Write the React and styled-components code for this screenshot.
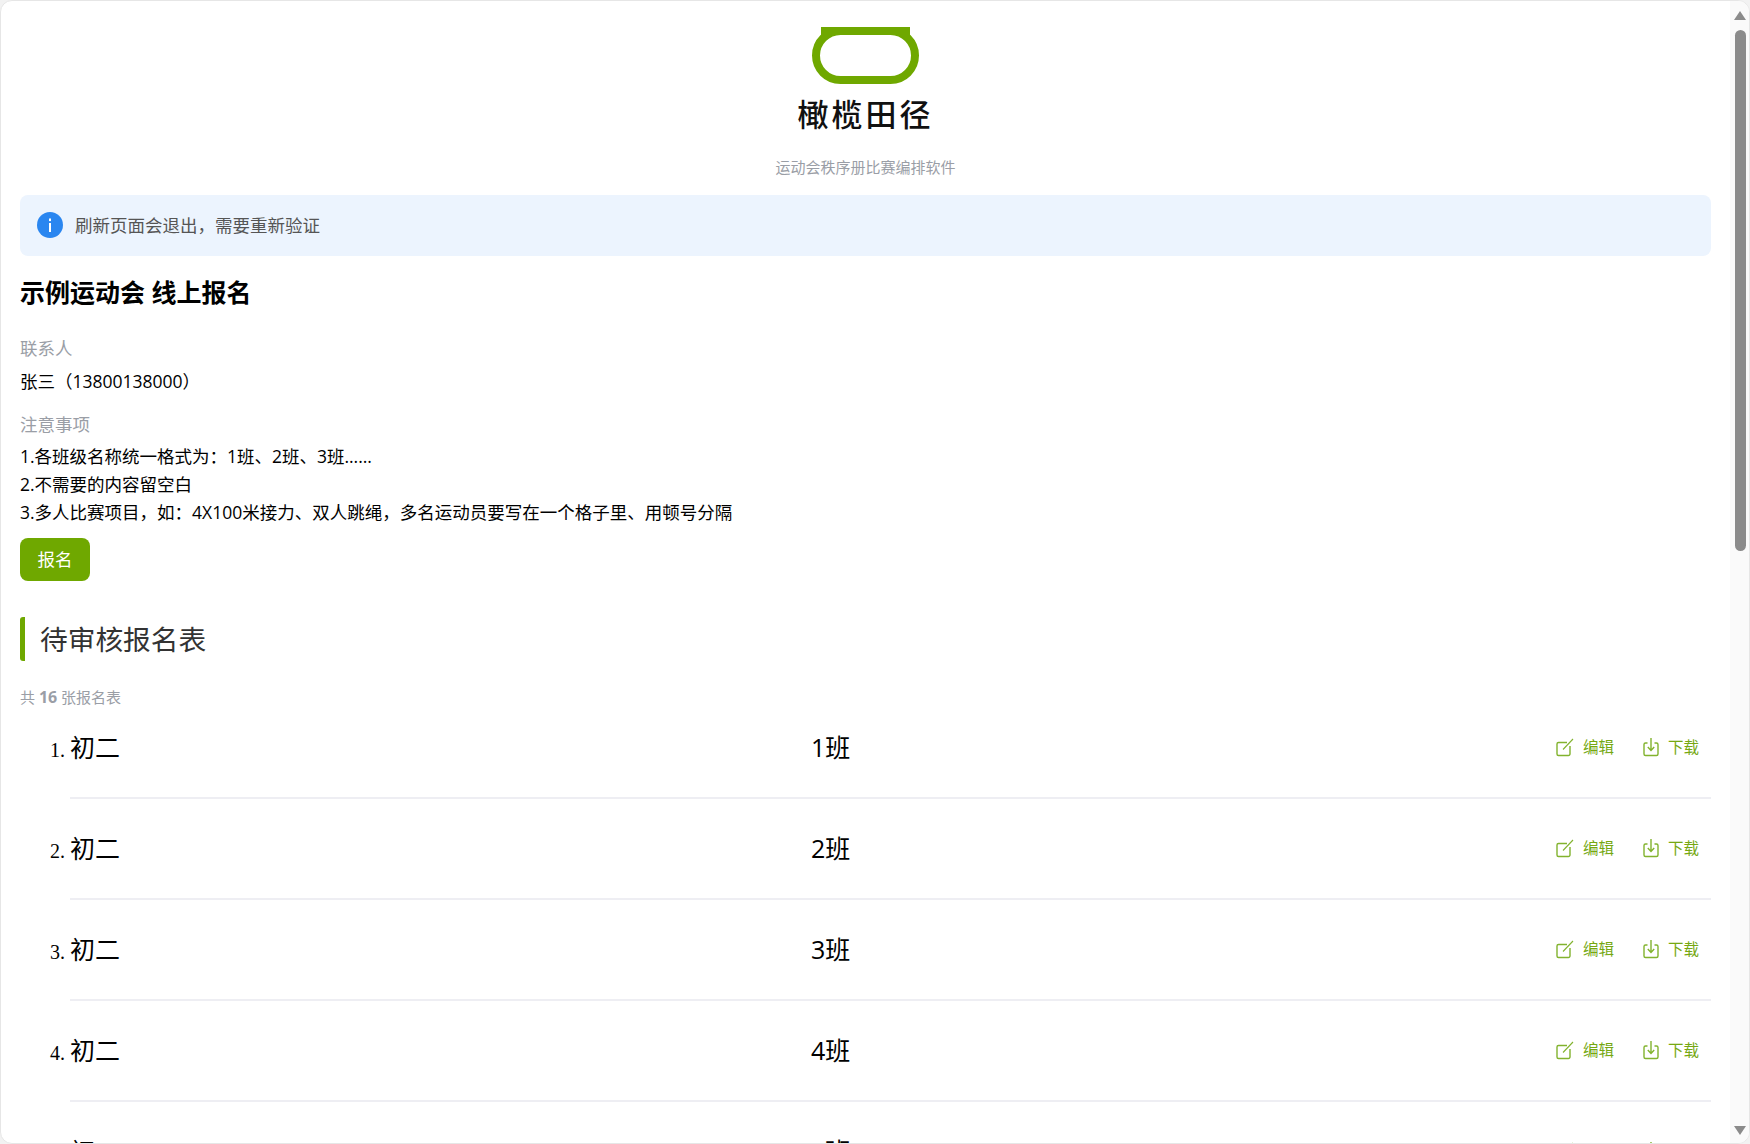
import React from 'react';
import styled, { createGlobalStyle } from 'styled-components';

const green = '#6fa800';
const cjk = '"Open Sans", "Noto Sans CJK SC", sans-serif';

const GlobalStyle = createGlobalStyle`
  html, body {
    margin: 0;
    height: 100%;
    background: #f2f2f2;
    overflow: hidden;
  }
  * { box-sizing: border-box; }
`;

const Frame = styled.div`
  display: flex;
  width: 1750px;
  height: 1144px;
  border: 1px solid #e6e6e6;
  border-radius: 12px;
  background: #fff;
  overflow: hidden;
`;

const Scroller = styled.div`
  flex: 1;
  min-width: 0;
  overflow: hidden;
  font-family: ${cjk};
  color: #000;
`;

const ScrollRail = styled.div`
  display: flex;
  flex-direction: column;
  flex: none;
  width: 19px;
  padding: 10px 3px 8px 5px;
  background: #fafafa;
`;

const RailArrow = styled.div`
  width: 0;
  height: 0;
  margin-left: -1px;
  border-left: 6px solid transparent;
  border-right: 6px solid transparent;
  border-${props => (props.$down ? 'top' : 'bottom')}: 9px solid #8b8b8b;
  ${props => (props.$down ? 'margin-top: auto;' : '')}
`;

const RailThumb = styled.div`
  width: 11px;
  height: 521px;
  margin-top: 10px;
  border-radius: 6px;
  background: #8b8b8b;
`;

const Content = styled.main`
  padding: 26px 19px 66px 19px;
`;

const Brand = styled.header`
  display: flex;
  flex-direction: column;
  align-items: center;
`;

const LogoText = styled.div`
  margin-top: 5px;
  font-size: 31px;
  line-height: 48px;
  letter-spacing: 3px;
  font-weight: 500;
  color: #111;
`;

const Tagline = styled.div`
  margin-top: 17px;
  font-size: 15px;
  line-height: 24px;
  color: #9a9ea6;
`;

const Notice = styled.div`
  display: flex;
  align-items: center;
  gap: 12px;
  height: 61px;
  margin-top: 16px;
  padding: 0 17px 2px;
  border-radius: 8px;
  background: #ecf4fe;
  font-size: 17.5px;
  color: #555;
`;

const Title = styled.h1`
  margin: 18px 0 0;
  font-size: 25px;
  line-height: 36px;
  font-weight: 700;
`;

const FieldLabel = styled.div`
  margin-top: ${props => props.$top}px;
  font-size: 17.5px;
  line-height: 28px;
  color: #9a9ea6;
`;

const FieldValue = styled.div`
  margin-top: ${props => props.$top}px;
  font-size: 17.5px;
  line-height: 28px;
`;

const SignupButton = styled.button`
  display: block;
  width: 70px;
  height: 43px;
  margin-top: 12px;
  padding: 0 0 2px;
  border: 0;
  border-radius: 8px;
  background: ${green};
  color: #fff;
  font-family: inherit;
  font-size: 17.5px;
`;

const SectionTitle = styled.h2`
  margin: 36px 0 0;
  height: 44px;
  padding-left: 15px;
  border-left: 5px solid ${green};
  border-radius: 3px;
  font-size: 27.7px;
  line-height: 44px;
  font-weight: 400;
  color: #333;
`;

const Count = styled.div`
  margin-top: 24px;
  font-size: 15px;
  line-height: 24px;
  color: #9a9ea6;

  b {
    font-size: 16px;
  }
`;

const SheetList = styled.ol`
  margin: -11px 0 0;
  padding: 0 0 0 50px;
`;

const SheetRow = styled.li`
  height: 101px;
  border-bottom: 2px solid #eeeef3;
  font-size: 25px;

  &::marker {
    font-family: "Liberation Serif", serif;
    font-size: 20px;
  }
`;

const RowBody = styled.div`
  display: grid;
  grid-template-columns: 741px 1fr auto;
  align-items: center;
  height: 98px;
  padding-right: 12px;
  line-height: 36px;
`;

const Actions = styled.div`
  display: flex;
  gap: 29px;
`;

const ActionLink = styled.a`
  display: flex;
  align-items: center;
  gap: 9px;
  font-size: 15.5px;
  line-height: 20px;
  color: #76a812;
`;

const LogoMark = () => (
  <svg width="108" height="58" viewBox="0 0 108 58">
    <rect x="4" y="4" width="99" height="49" rx="24.5" fill="none" stroke={green} strokeWidth="8" />
    <rect x="9" y="0" width="89" height="8" fill={green} />
  </svg>
);

const InfoIcon = () => (
  <svg width="26" height="26" viewBox="0 0 26 26">
    <circle cx="13" cy="13" r="13" fill="#2a86f0" />
    <rect x="12" y="11" width="2" height="9" fill="#fff" />
    <rect x="12" y="6.5" width="2" height="2.6" fill="#fff" />
  </svg>
);

const EditIcon = () => (
  <svg width="18" height="19" viewBox="0 0 18 19" fill="none" stroke="#82b32e" strokeWidth="1.4">
    <path d="M11 4.500H2.500a1.500 1.500 0 0 0-1.500 1.500v10a1.500 1.500 0 0 0 1.500 1.500h10a1.500 1.500 0 0 0 1.500-1.500V8" />
    <path d="M7 11.500 17 1" strokeWidth="1.100" />
  </svg>
);

const DownloadIcon = () => (
  <svg width="16" height="20" viewBox="0 0 16 20" fill="none" stroke="#82b32e" strokeWidth="1.400">
    <path d="M4.500 6H2.500a1.500 1.500 0 0 0-1.500 1.500v9.500a1.500 1.500 0 0 0 1.500 1.500h11a1.500 1.500 0 0 0 1.500-1.500V7.500a1.500 1.500 0 0 0-1.500-1.500h-2" />
    <path d="M8 1v12M4.800 10 8 13.500 11.200 10" />
  </svg>
);

const sheets = Array.from({ length: 16 }, (_, i) => ({ grade: '初二', name: `${i + 1}班` }));

export default function App() {
  return (
    <Frame>
      <GlobalStyle />
      <Scroller>
        <Content>
          <Brand>
            <LogoMark />
            <LogoText>橄榄田径</LogoText>
            <Tagline>运动会秩序册比赛编排软件</Tagline>
          </Brand>
          <Notice>
            <InfoIcon />
            刷新页面会退出，需要重新验证
          </Notice>
          <Title>示例运动会 线上报名</Title>
          <FieldLabel $top={24}>联系人</FieldLabel>
          <FieldValue $top={5}>张三（13800138000）</FieldValue>
          <FieldLabel $top={15}>注意事项</FieldLabel>
          <FieldValue $top={4}>
            1.各班级名称统一格式为：1班、2班、3班……<br />
            2.不需要的内容留空白<br />
            3.多人比赛项目，如：4X100米接力、双人跳绳，多名运动员要写在一个格子里、用顿号分隔
          </FieldValue>
          <SignupButton>报名</SignupButton>
          <SectionTitle>待审核报名表</SectionTitle>
          <Count>共 <b>16</b> 张报名表</Count>
          <SheetList>
            {sheets.map(sheet => (
              <SheetRow key={sheet.name}>
                <RowBody>
                  <span>{sheet.grade}</span>
                  <span>{sheet.name}</span>
                  <Actions>
                    <ActionLink><EditIcon />编辑</ActionLink>
                    <ActionLink><DownloadIcon />下载</ActionLink>
                  </Actions>
                </RowBody>
              </SheetRow>
            ))}
          </SheetList>
        </Content>
      </Scroller>
      <ScrollRail>
        <RailArrow />
        <RailThumb />
        <RailArrow $down />
      </ScrollRail>
    </Frame>
  );
}
